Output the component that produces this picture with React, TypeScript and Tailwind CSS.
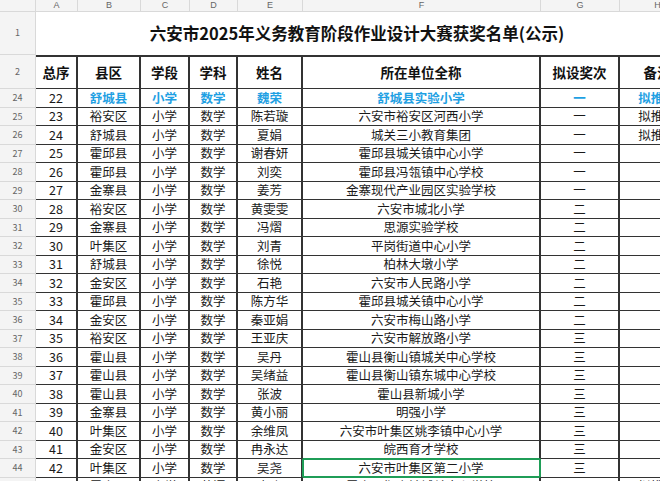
import React from 'react';

// 列宽 A..H
const W = ['w-[42px]', 'w-[63px]', 'w-[49px]', 'w-[48px]', 'w-[65px]', 'w-[238px]', 'w-[79px]', 'w-[76px]'];
const LETTERS = ['A', 'B', 'C', 'D', 'E', 'F', 'G', 'H'];

type Rec = { no: number; row: number; area: string; stage: string; subject: string; name: string; school: string; prize: string; note?: string };

const rows: Rec[] = [
  { row: 24, no: 22, area: '舒城县', stage: '小学', subject: '数学', name: '魏荣', school: '舒城县实验小学', prize: '一', note: '拟推荐' },
  { row: 25, no: 23, area: '裕安区', stage: '小学', subject: '数学', name: '陈若璇', school: '六安市裕安区河西小学', prize: '一', note: '拟推荐' },
  { row: 26, no: 24, area: '舒城县', stage: '小学', subject: '数学', name: '夏娟', school: '城关三小教育集团', prize: '一', note: '拟推荐' },
  { row: 27, no: 25, area: '霍邱县', stage: '小学', subject: '数学', name: '谢春妍', school: '霍邱县城关镇中心小学', prize: '一' },
  { row: 28, no: 26, area: '霍邱县', stage: '小学', subject: '数学', name: '刘奕', school: '霍邱县冯瓴镇中心学校', prize: '一' },
  { row: 29, no: 27, area: '金寨县', stage: '小学', subject: '数学', name: '姜芳', school: '金寨现代产业园区实验学校', prize: '一' },
  { row: 30, no: 28, area: '裕安区', stage: '小学', subject: '数学', name: '黄雯雯', school: '六安市城北小学', prize: '二' },
  { row: 31, no: 29, area: '金寨县', stage: '小学', subject: '数学', name: '冯熠', school: '思源实验学校', prize: '二' },
  { row: 32, no: 30, area: '叶集区', stage: '小学', subject: '数学', name: '刘青', school: '平岗街道中心小学', prize: '二' },
  { row: 33, no: 31, area: '舒城县', stage: '小学', subject: '数学', name: '徐悦', school: '柏林大墩小学', prize: '二' },
  { row: 34, no: 32, area: '金安区', stage: '小学', subject: '数学', name: '石艳', school: '六安市人民路小学', prize: '二' },
  { row: 35, no: 33, area: '霍邱县', stage: '小学', subject: '数学', name: '陈方华', school: '霍邱县城关镇中心小学', prize: '二' },
  { row: 36, no: 34, area: '金安区', stage: '小学', subject: '数学', name: '秦亚娟', school: '六安市梅山路小学', prize: '二' },
  { row: 37, no: 35, area: '裕安区', stage: '小学', subject: '数学', name: '王亚庆', school: '六安市解放路小学', prize: '三' },
  { row: 38, no: 36, area: '霍山县', stage: '小学', subject: '数学', name: '吴丹', school: '霍山县衡山镇城关中心学校', prize: '三' },
  { row: 39, no: 37, area: '霍山县', stage: '小学', subject: '数学', name: '吴绪益', school: '霍山县衡山镇东城中心学校', prize: '三' },
  { row: 40, no: 38, area: '霍山县', stage: '小学', subject: '数学', name: '张波', school: '霍山县新城小学', prize: '三' },
  { row: 41, no: 39, area: '金寨县', stage: '小学', subject: '数学', name: '黄小丽', school: '明强小学', prize: '三' },
  { row: 42, no: 40, area: '叶集区', stage: '小学', subject: '数学', name: '余维凤', school: '六安市叶集区姚李镇中心小学', prize: '三' },
  { row: 43, no: 41, area: '金安区', stage: '小学', subject: '数学', name: '冉永达', school: '皖西育才学校', prize: '三' },
  { row: 44, no: 42, area: '叶集区', stage: '小学', subject: '数学', name: '吴尧', school: '六安市叶集区第二小学', prize: '三' },
  { row: 45, no: 43, area: '霍山县', stage: '小学', subject: '英语', name: '袁晓', school: '霍山县衡山镇城关中心学校', prize: '一', note: '拟推荐' },
];

function RowHead({ n, h }: { n: number | string; h: string }) {
  return (
    <div className={`w-[36px] shrink-0 ${h} flex items-center justify-center bg-[#f4f4f4] border-r border-b border-[#d9d9d9] text-[9px] text-[#666]`}>
      {n}
    </div>
  );
}

export default function App() {
  return (
    <div className="w-[660px] h-[481px] overflow-hidden bg-white font-['Noto_Sans_CJK_SC','Noto_Sans',sans-serif] text-[#1a1a1a]">
      <div className="w-[696px]">
        {/* 列标 */}
        <div className="flex h-[12px]">
          <div className="w-[36px] shrink-0 bg-[#f4f4f4] border-r border-b border-[#d9d9d9]" />
          {LETTERS.map((l, i) => (
            <div key={l} className={`${W[i]} shrink-0 flex items-center justify-center bg-[#f4f4f4] border-r border-b border-[#d9d9d9] text-[9px] leading-none text-[#666] font-['Liberation_Sans',sans-serif]`}>
              {l}
            </div>
          ))}
        </div>

        {/* 标题行 */}
        <div className="flex">
          <RowHead n={1} h="h-[43px]" />
          <div className="w-[660px] shrink-0 h-[43px] flex items-center justify-center pr-[18px] text-[16.5px] font-bold text-[#111]">
            六安市2025年义务教育阶段作业设计大赛获奖名单(公示)
          </div>
        </div>

        {/* 表头 */}
        <div className="flex">
          <RowHead n={2} h="h-[34px]" />
          {['总序', '县区', '学段', '学科', '姓名', '所在单位全称', '拟设奖次', '备注'].map((t, i) => (
            <div key={t} className={`${W[i]} shrink-0 h-[34px] flex items-center justify-center border-t-2 border-b border-r-2 border-[#333] text-[13.5px] font-bold text-[#111]`}>
              {t}
            </div>
          ))}
        </div>

        {/* 数据 */}
        {rows.map(r => {
          const blue = r.row === 24;
          const cells = [String(r.no), r.area, r.stage, r.subject, r.name, r.school, r.prize, r.note || ''];
          return (
            <div key={r.row} className="flex">
              <RowHead n={r.row} h="h-[18.5px]" />
              {cells.map((c, i) => (
                <div
                  key={i}
                  className={`${W[i]} shrink-0 h-[18.5px] relative flex items-center justify-center border-b border-r-2 border-[#333] text-[12.5px] leading-none whitespace-nowrap ${blue && i > 0 ? 'text-[#1ea0e3] font-bold' : ''}`}
                >
                  {c}
                  {r.row === 44 && i === 5 && (
                    <div className="absolute left-[-1px] top-[-1px] right-[-2px] bottom-[-1px] border-2 border-[#1f9d57] rounded-[2px]" />
                  )}
                </div>
              ))}
            </div>
          );
        })}
      </div>
    </div>
  );
}
